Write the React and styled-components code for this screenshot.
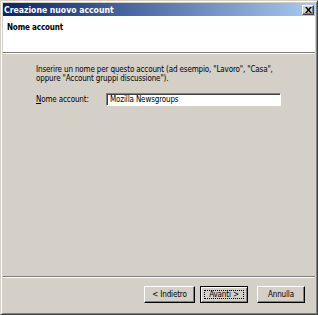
import React from 'react';
import styled, { createGlobalStyle } from 'styled-components';

const GlobalStyle = createGlobalStyle`
  html, body {
    margin: 0;
    padding: 0;
    background: #d4d0c8;
  }
  * {
    box-sizing: border-box;
  }
`

export const Window = styled.div`
  width: 318px;
  height: 315px;
  display: flex;
  flex-direction: column;
  background: #d4d0c8;
  border-top: 1px solid #d4d0c8;
  border-left: 1px solid #d4d0c8;
  border-right: 1px solid #404040;
  border-bottom: 1px solid #404040;
  box-shadow: inset 1px 1px 0 #ffffff, inset -1px -1px 0 #808080;
  padding: 2px;
  font-family: "DejaVu Sans Condensed", Tahoma, "Liberation Sans", sans-serif;
  font-size: 8px;
  letter-spacing: -0.15px;
  color: #000;
`

export const TitleBar = styled.div`
  height: 13px;
  display: flex;
  align-items: center;
  justify-content: space-between;
  padding: 0 1px 0 1px;
  background: linear-gradient(to right, #0a246a, #a6caf0);
`

export const TitleText = styled.span`
  color: #fff;
  font-weight: bold;
  font-size: 8.6px;
  letter-spacing: 0;
`

export const CloseButton = styled.div`
  width: 12px;
  height: 10px;
  background: #d4d0c8;
  border-top: 1px solid #fff;
  border-left: 1px solid #fff;
  border-right: 1px solid #404040;
  border-bottom: 1px solid #404040;
  box-shadow: inset -1px -1px 0 #808080;
  display: flex;
  align-items: center;
  justify-content: center;
`

export const Header = styled.div`
  background: #fff;
  height: 37px;
  padding: 7px 0 0 4px;
  font-weight: bold;
  font-size: 8px;
  border-bottom: 1px solid #808080;
  box-shadow: 0 1px 0 #ffffff;
`

export const Body = styled.div`
  flex: 1;
  padding: 12px 0 0 33px;
  display: flex;
  flex-direction: column;
`

export const Intro = styled.p`
  margin: 0;
  line-height: 9px;
  width: 250px;
`

export const FieldRow = styled.div`
  display: flex;
  align-items: center;
  margin-top: 10px;
`

export const Label = styled.label`
  width: 70px;
  u {
    text-decoration: underline;
  }
`

export const TextInput = styled.input`
  width: 175px;
  height: 13px;
  padding: 0 3px;
  font: inherit;
  letter-spacing: inherit;
  background: #fff;
  border-top: 1px solid #808080;
  border-left: 1px solid #808080;
  border-right: 1px solid #ffffff;
  border-bottom: 1px solid #ffffff;
  box-shadow: inset 1px 1px 0 #404040;
  outline: none;
`

export const Footer = styled.div`
  border-top: 1px solid #808080;
  box-shadow: inset 0 1px 0 #ffffff;
  height: 36px;
  display: flex;
  justify-content: flex-end;
  align-items: flex-start;
  padding: 9px 10px 0 0;
  gap: 5px;
`

export const Button = styled.button`
  width: ${p => p.$w}px;
  height: 17px;
  padding: 0;
  font: inherit;
  letter-spacing: inherit;
  color: #000;
  background: #d4d0c8;
  border-top: 1px solid ${p => (p.$default ? '#000' : '#fff')};
  border-left: 1px solid ${p => (p.$default ? '#000' : '#fff')};
  border-right: 1px solid #000;
  border-bottom: 1px solid #000;
  box-shadow: ${p => (p.$default
    ? 'inset 1px 1px 0 #fff, inset -1px -1px 0 #808080'
    : 'inset -1px -1px 0 #808080')};
  margin-left: ${p => p.$gap || 0}px;
  position: relative;
`

export const FocusRing = styled.span`
  position: absolute;
  inset: 3px;
  border: 1px dotted #000;
`

export default function App() {
  return (
    <>
      <GlobalStyle />
      <Window>
        <TitleBar>
          <TitleText>Creazione nuovo account</TitleText>
          <CloseButton>
            <svg width="7" height="6" viewBox="0 0 7 6">
              <path d="M0 0 L2 0 L3.5 2 L5 0 L7 0 L4.5 3 L7 6 L5 6 L3.5 4 L2 6 L0 6 L2.5 3 Z" fill="#000" />
            </svg>
          </CloseButton>
        </TitleBar>
        <Header>Nome account</Header>
        <Body>
          <Intro>
            Inserire un nome per questo account (ad esempio, "Lavoro", "Casa", oppure "Account gruppi discussione").
          </Intro>
          <FieldRow>
            <Label><u>N</u>ome account:</Label>
            <TextInput defaultValue="Mozilla Newsgroups" />
          </FieldRow>
        </Body>
        <Footer>
          <Button $w={51}>&lt; Indietro</Button>
          <Button $w={48} $default>
            Avanti &gt;
            <FocusRing />
          </Button>
          <Button $w={48} $gap={4}>Annulla</Button>
        </Footer>
      </Window>
    </>
  );
}
